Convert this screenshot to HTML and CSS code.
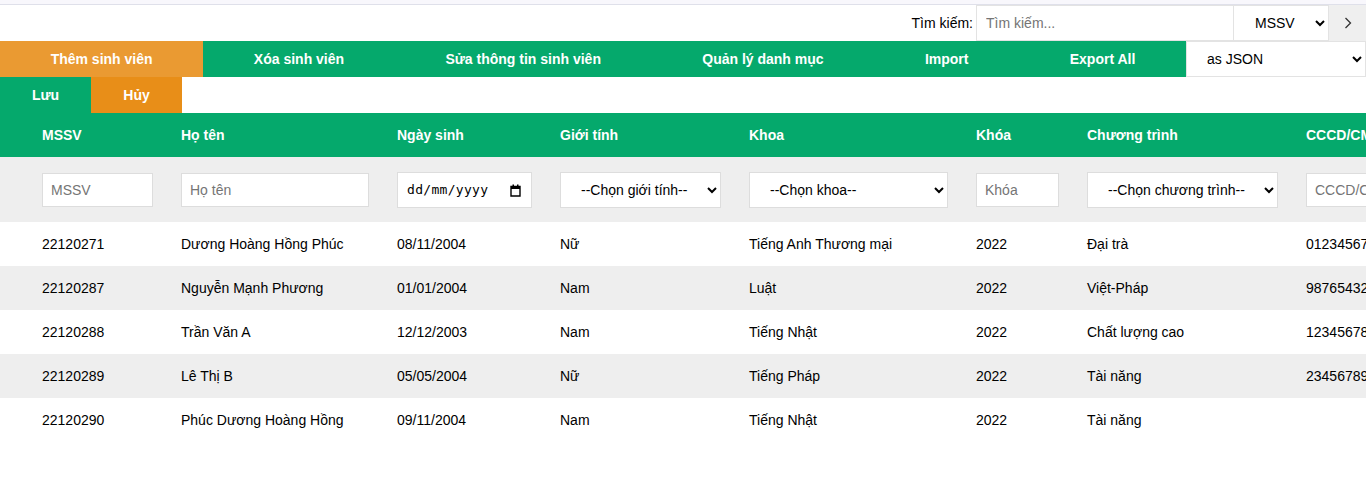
FILE: index.html
```html
<!DOCTYPE html>
<html lang="vi">
<head>
<meta charset="utf-8">
<title>Quản lý sinh viên</title>
<link rel="stylesheet" href="styles.css">
</head>
<body>
<div class="topstrip"></div>
<div class="searchbar">
  <label class="search-label" for="q">Tìm kiếm:</label>
  <input id="q" class="search-input" type="text" placeholder="Tìm kiếm...">
  <select class="search-select"><option>MSSV</option></select>
  <button class="search-btn" type="button"><svg width="8" height="12" viewBox="0 0 8 12"><path d="M1.5 1 L6.5 6 L1.5 11" fill="none" stroke="#333" stroke-width="1.3"/></svg></button>
</div>
<nav class="navbar">
  <a class="nav-item nav-active">Thêm sinh viên</a>
  <a class="nav-item">Xóa sinh viên</a>
  <a class="nav-item">Sửa thông tin sinh viên</a>
  <a class="nav-item">Quản lý danh mục</a>
  <a class="nav-item">Import</a>
  <a class="nav-item">Export All</a>
  <select class="export-select"><option>as JSON</option></select>
</nav>
<div class="actions">
  <button class="act act-save" type="button">Lưu</button>
  <button class="act act-cancel" type="button">Hủy</button>
</div>
<div class="table-wrap">
<table class="students">
  <colgroup>
    <col class="c1"><col class="c2"><col class="c3"><col class="c4"><col class="c5"><col class="c6"><col class="c7"><col class="c8">
  </colgroup>
  <thead>
    <tr class="head">
      <th>MSSV</th><th>Họ tên</th><th>Ngày sinh</th><th>Giới tính</th><th>Khoa</th><th>Khóa</th><th>Chương trình</th><th>CCCD/CMND</th>
    </tr>
    <tr class="filter">
      <td><input class="f-input" type="text" placeholder="MSSV"></td>
      <td><input class="f-input" type="text" placeholder="Họ tên"></td>
      <td>
        <div class="date-field">
          <input class="f-date" type="text" placeholder="dd/mm/yyyy">
          <svg class="cal-icon" width="11" height="13" viewBox="0 0 11 13"><path d="M1 2.5 H10 V12 H1 Z" fill="none" stroke="#000" stroke-width="1.4"/><rect x="1" y="2" width="9" height="3" fill="#000"/><rect x="2.5" y="0.5" width="1.5" height="2" fill="#000"/><rect x="7" y="0.5" width="1.5" height="2" fill="#000"/></svg>
        </div>
      </td>
      <td><select class="f-select"><option>--Chọn giới tính--</option></select></td>
      <td><select class="f-select"><option>--Chọn khoa--</option></select></td>
      <td><input class="f-input" type="text" placeholder="Khóa"></td>
      <td><select class="f-select"><option>--Chọn chương trình--</option></select></td>
      <td><input class="f-input" type="text" placeholder="CCCD/CMND"></td>
    </tr>
  </thead>
  <tbody>
    <tr><td>22120271</td><td>Dương Hoàng Hồng Phúc</td><td>08/11/2004</td><td>Nữ</td><td>Tiếng Anh Thương mại</td><td>2022</td><td>Đại trà</td><td>012345678901</td></tr>
    <tr><td>22120287</td><td>Nguyễn Mạnh Phương</td><td>01/01/2004</td><td>Nam</td><td>Luật</td><td>2022</td><td>Việt-Pháp</td><td>987654321098</td></tr>
    <tr><td>22120288</td><td>Trần Văn A</td><td>12/12/2003</td><td>Nam</td><td>Tiếng Nhật</td><td>2022</td><td>Chất lượng cao</td><td>123456789012</td></tr>
    <tr><td>22120289</td><td>Lê Thị B</td><td>05/05/2004</td><td>Nữ</td><td>Tiếng Pháp</td><td>2022</td><td>Tài năng</td><td>234567890123</td></tr>
    <tr><td>22120290</td><td>Phúc Dương Hoàng Hồng</td><td>09/11/2004</td><td>Nam</td><td>Tiếng Nhật</td><td>2022</td><td>Tài năng</td><td></td></tr>
  </tbody>
</table>
</div>
</body>
</html>
```

FILE: styles.css
```css
* { box-sizing: border-box; }
html, body {
  margin: 0;
  padding: 0;
  background: #fff;
  font-family: "Liberation Sans", Arial, sans-serif;
  font-size: 14px;
  color: #000;
  overflow: hidden;
}
.topstrip {
  height: 5px;
  background: #f8f7fc;
  border-bottom: 1px solid #dfe0ea;
}
.searchbar {
  display: flex;
  justify-content: flex-end;
  align-items: center;
  height: 36px;
}
.search-label {
  margin-right: 3px;
  font-size: 14px;
}
.search-input {
  width: 258px;
  height: 36px;
  border: 1px solid #e3e3e3;
  padding: 0 9px;
  font-family: "Liberation Sans", Arial, sans-serif;
  font-size: 14px;
  outline: none;
}
.search-input::placeholder { color: #757575; }
.search-select {
  width: 95px;
  height: 36px;
  border: 1px solid #e3e3e3;
  border-left: none;
  background: #fff;
  padding: 0 4px 0 17px;
  font-family: "Liberation Sans", Arial, sans-serif;
  font-size: 14px;
  color: #000;
  border-radius: 0;
}
.search-btn {
  width: 37px;
  height: 36px;
  border: none;
  background: #efefef;
  display: flex;
  align-items: center;
  justify-content: center;
  padding: 0;
}
.navbar {
  display: flex;
  height: 36px;
  background: #05a96c;
}
.nav-item {
  flex: 1 1 auto;
  display: flex;
  align-items: center;
  justify-content: center;
  color: #fff;
  font-weight: bold;
  font-size: 14px;
  white-space: nowrap;
}
.nav-active { background: #ea9a32; }
.export-select {
  width: 180px;
  flex: 0 0 180px;
  height: 36px;
  border: 1px solid #e3e3e3;
  background: #fff;
  padding: 0 4px 0 16px;
  font-family: "Liberation Sans", Arial, sans-serif;
  font-size: 14px;
  color: #000;
  border-radius: 0;
}
.actions {
  display: flex;
  height: 36px;
}
.act {
  width: 91px;
  height: 36px;
  border: none;
  color: #fff;
  font-weight: bold;
  font-size: 14px;
  font-family: "Liberation Sans", Arial, sans-serif;
  padding: 0;
}
.act-save { background: #05a96c; }
.act-cancel { background: #e88e18; }
.table-wrap {
  width: 100%;
  overflow: hidden;
}
.students {
  border-collapse: collapse;
  table-layout: fixed;
  width: 1564px;
}
.c1 { width: 167px; }
.c2 { width: 216px; }
.c3 { width: 163px; }
.c4 { width: 189px; }
.c5 { width: 227px; }
.c6 { width: 111px; }
.c7 { width: 219px; }
.c8 { width: 272px; }
.students th, .students td {
  padding: 0 14px;
  text-align: left;
  white-space: nowrap;
  overflow: hidden;
}
.students th:first-child, .students td:first-child { padding-left: 42px; }
.head { background: #05a96c; height: 44px; }
.head th { color: #fff; font-weight: bold; font-size: 14px; }
.filter { background: #eeeeee; height: 65px; }
.students tbody tr { height: 44px; }
.students tbody tr:nth-child(even) { background: #eeeeee; }
.f-input {
  width: 100%;
  height: 34px;
  border: 1px solid #dddddd;
  background: #fff;
  padding: 0 8px;
  font-family: "Liberation Sans", Arial, sans-serif;
  font-size: 14px;
  outline: none;
  display: block;
}
.f-input::placeholder { color: #757575; }
.date-field {
  position: relative;
  width: 100%;
}
.f-date {
  width: 100%;
  height: 36px;
  border: 1px solid #dddddd;
  background: #fff;
  padding: 0 28px 0 9px;
  font-family: "DejaVu Sans Mono", monospace;
  font-size: 13px;
  letter-spacing: 0.3px;
  color: #000;
  outline: none;
  display: block;
}
.f-date::placeholder { color: #000; opacity: 1; }
.cal-icon {
  position: absolute;
  right: 11px;
  top: 12px;
  pointer-events: none;
}
.f-select {
  width: 100%;
  height: 36px;
  border: 1px solid #dddddd;
  background: #fff;
  padding: 0 4px 0 16px;
  font-family: "Liberation Sans", Arial, sans-serif;
  font-size: 14px;
  color: #000;
  border-radius: 0;
  display: block;
}
```
